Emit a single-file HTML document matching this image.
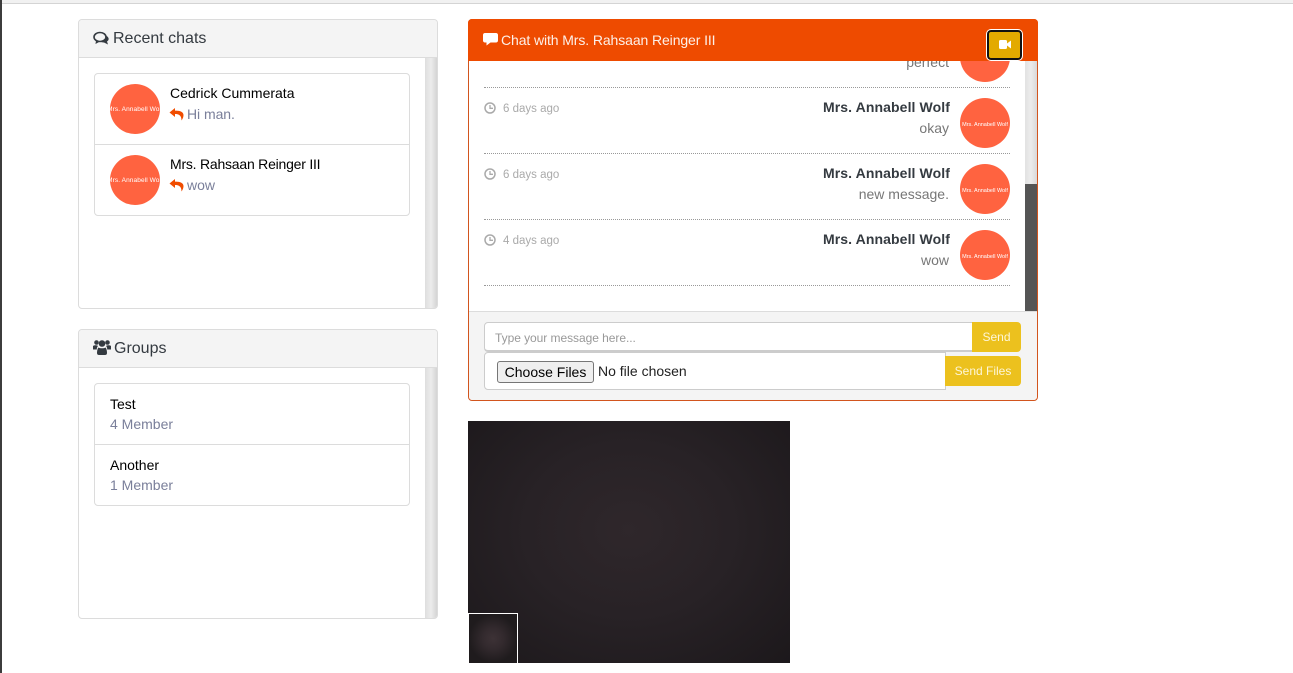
<!DOCTYPE html>
<html><head><meta charset="utf-8"><style>
*{box-sizing:border-box}
html,body{margin:0;padding:0;width:1293px;height:673px;overflow:hidden;background:#fff;font-family:"Liberation Sans",sans-serif;color:#212529}
.a{position:absolute;white-space:nowrap}
.card{position:absolute;background:#fff;border:1px solid #dcdcdc;border-radius:4px;overflow:hidden}
.hd{position:absolute;left:0;top:0;right:0;height:38px;background:#f4f4f4;border-bottom:1px solid #dcdcdc}
.sb{position:absolute;right:0;top:38px;bottom:0;width:12px;background:linear-gradient(90deg,#dedede,#ececec 50%,#d4d4d4)}
.lg{position:absolute;background:#fff;border:1px solid #dcdcdc;border-radius:4px;width:316px}
.nm{font-size:14px;color:#000}
.sub{font-size:14px;color:#7a7f9a}
.av{position:absolute;width:50px;height:50px;border-radius:50%;background:#ff6340;color:#fff;font-size:5.500px;line-height:54px;text-align:center;white-space:nowrap;overflow:hidden;display:flex;justify-content:center}
.av span{flex:none}
.dot{position:absolute;left:484px;width:526px;border-top:1px dotted #999;height:0}
.time{font-size:11.5px;color:#aaa}
.mn{font-size:14px;font-weight:bold;color:#343a40;text-align:right;right:343px;letter-spacing:.1px}
.mt{font-size:14px;color:#777;text-align:right;right:344px}
</style></head><body>
<div class="a" style="left:0;top:0;width:1293px;height:4px;background:#f1f1f1;border-bottom:1px solid #d4d4d4"></div>
<div class="a" style="left:0;top:0;width:2px;height:673px;background:#3c3c3c"></div>

<div class="card" style="left:78px;top:19px;width:360px;height:290px">
 <div class="hd"></div><div class="sb"></div>
</div>
<svg class="a" style="left:93px;top:31px" width="17" height="15" viewBox="0 0 17 15"><ellipse cx="7" cy="6" rx="6" ry="4.5" fill="none" stroke="#343a40" stroke-width="1.6"/><path d="M3 9.5 2.5 13 6.5 10.8ZM13.6 5C16 6.300 16.500 9 14 10.500L15 13.500 11 11.500C9.500 11.600 8.500 11.300 7.500 10.800 10 10.700 13.300 9 13.600 5Z" fill="#343a40"/></svg>
<div class="a" style="left:113px;top:29px;font-size:16px;line-height:19px;color:#343a40;letter-spacing:0">Recent chats</div>
<div class="lg" style="left:94px;top:73px;height:143px"><div style="position:absolute;left:0;right:0;top:70px;border-top:1px solid #dcdcdc"></div></div>
<div class="av" style="left:110px;top:84px;font-size:6.500px;letter-spacing:.1px;line-height:52px"><span>Mrs. Annabell Wolf</span></div>
<div class="a nm" style="left:170px;top:85px;line-height:17px">Cedrick Cummerata</div>
<svg class="a" style="left:169px;top:107px" width="15" height="14" viewBox="0 0 15 14"><path d="M6 1 .5 5.500 6 10V7C9.500 7 12.500 8 12.500 13.500 14 11.500 14.500 9.500 14.500 8 14.500 5 11 3.500 6 3.700Z" fill="#f04c00"/></svg>
<div class="a sub" style="left:187px;top:106px;line-height:17px;letter-spacing:-.05px">Hi man.</div>
<div class="av" style="left:110px;top:155px;font-size:6.500px;letter-spacing:.1px;line-height:52px"><span>Mrs. Annabell Wolf</span></div>
<div class="a nm" style="left:170px;top:156px;line-height:17px;letter-spacing:-.22px">Mrs. Rahsaan Reinger III</div>
<svg class="a" style="left:169px;top:178px" width="15" height="14" viewBox="0 0 15 14"><path d="M6 1 .5 5.500 6 10V7C9.500 7 12.500 8 12.500 13.500 14 11.500 14.500 9.500 14.500 8 14.500 5 11 3.500 6 3.700Z" fill="#f04c00"/></svg>
<div class="a sub" style="left:187px;top:177px;line-height:17px">wow</div>

<div class="card" style="left:78px;top:329px;width:360px;height:290px">
 <div class="hd"></div><div class="sb"></div>
</div>
<svg class="a" style="left:93px;top:339px" width="18" height="17" viewBox="0 0 18 17"><circle cx="3.500" cy="3.500" r="2.300" fill="#343a40"/><circle cx="14.500" cy="3.500" r="2.300" fill="#343a40"/><circle cx="9" cy="4.500" r="3.300" fill="#343a40"/><path d="M0 7C1 6 4 6 5 7 4 8 3.800 9 3.800 10.500H0ZM18 7C17 6 14 6 13 7 14 8 14.200 9 14.200 10.500H18Z" fill="#343a40"/><path d="M5.500 8.500C7 9.500 11 9.500 12.500 8.500 13.500 9.500 14 12 14 14 14 15.500 13 16 12 16H6C5 16 4 15.500 4 14 4 12 4.500 9.500 5.500 8.500Z" fill="#343a40"/></svg>
<div class="a" style="left:114px;top:339px;font-size:16px;line-height:19px;color:#343a40">Groups</div>
<div class="lg" style="left:94px;top:383px;height:123px"><div style="position:absolute;left:0;right:0;top:60px;border-top:1px solid #dcdcdc"></div></div>
<div class="a nm" style="left:110px;top:396px;line-height:17px">Test</div>
<div class="a sub" style="left:110px;top:416px;line-height:17px">4 Member</div>
<div class="a nm" style="left:110px;top:457px;line-height:17px">Another</div>
<div class="a sub" style="left:110px;top:477px;line-height:17px">1 Member</div>

<!-- chat -->
<div class="a" style="left:468px;top:19px;width:570px;height:382px;border:1px solid #d2551e;border-radius:4px;background:#fff"></div>
<div class="a" style="left:903px;top:55px;width:46px;text-align:right;font-size:14px;line-height:1;color:#777;height:15px;overflow:hidden">perfect</div>
<div class="av" style="left:960px;top:32px"><span>Mrs. Annabell Wolf</span></div>
<div class="dot" style="top:87px"></div>
<div class="dot" style="top:153px"></div>
<div class="dot" style="top:219px"></div>
<div class="dot" style="top:285px"></div>
<svg class="a" style="left:484px;top:102px" width="12" height="12" viewBox="0 0 12 12"><circle cx="6" cy="6" r="5" fill="none" stroke="#aaa" stroke-width="1.500"/><path d="M6 3V6.300H9" fill="none" stroke="#aaa" stroke-width="1.300"/></svg>
<div class="a time" style="left:503px;top:102px;line-height:14px">6 days ago</div>
<svg class="a" style="left:484px;top:168px" width="12" height="12" viewBox="0 0 12 12"><circle cx="6" cy="6" r="5" fill="none" stroke="#aaa" stroke-width="1.500"/><path d="M6 3V6.300H9" fill="none" stroke="#aaa" stroke-width="1.300"/></svg>
<div class="a time" style="left:503px;top:168px;line-height:14px">6 days ago</div>
<svg class="a" style="left:484px;top:234px" width="12" height="12" viewBox="0 0 12 12"><circle cx="6" cy="6" r="5" fill="none" stroke="#aaa" stroke-width="1.500"/><path d="M6 3V6.300H9" fill="none" stroke="#aaa" stroke-width="1.300"/></svg>
<div class="a time" style="left:503px;top:234px;line-height:14px">4 days ago</div>

<div class="a mn" style="top:99px;line-height:17px">Mrs. Annabell Wolf</div>
<div class="a mt" style="top:120px;line-height:17px">okay</div>
<div class="av" style="left:960px;top:98px"><span>Mrs. Annabell Wolf</span></div>
<div class="a mn" style="top:165px;line-height:17px">Mrs. Annabell Wolf</div>
<div class="a mt" style="top:186px;line-height:17px">new message.</div>
<div class="av" style="left:960px;top:164px"><span>Mrs. Annabell Wolf</span></div>
<div class="a mn" style="top:231px;line-height:17px">Mrs. Annabell Wolf</div>
<div class="a mt" style="top:252px;line-height:17px">wow</div>
<div class="av" style="left:960px;top:230px"><span>Mrs. Annabell Wolf</span></div>

<div class="a" style="left:1025px;top:61px;width:12px;height:123px;background:linear-gradient(90deg,#e2e2e2,#ececec 50%,#d9d9d9)"></div>
<div class="a" style="left:1025px;top:184px;width:12px;height:127px;background:#555"></div>

<div class="a" style="left:468px;top:19px;width:570px;height:42px;background:#ee4b00;border-radius:4px 4px 0 0"></div>
<svg class="a" style="left:483px;top:33px" width="15" height="13" viewBox="0 0 15 13"><path d="M2 0H13C14 0 15 .8 15 2V7.500C15 8.700 14 9.500 13 9.500H7.500L3.500 12.500V9.500H2C.9 9.500 0 8.700 0 7.500V2C0 .8.900 0 2 0Z" fill="#fff"/></svg>
<div class="a" style="left:501px;top:32px;font-size:14px;line-height:17px;color:#fdf0e8;letter-spacing:-.1px">Chat with Mrs. Rahsaan Reinger III</div>
<div class="a" style="left:987px;top:30px;width:35px;height:30px;background:#e3aa00;border:2px solid #111;outline:1px solid #fff;border-radius:4px"></div>
<svg class="a" style="left:999px;top:40px" width="12" height="9" viewBox="0 0 12 9"><rect x="0" y="0" width="8" height="9" rx="1.500" fill="#fff"/><path d="M8 3.500 12 .5V8.500L8 5.500Z" fill="#fff"/></svg>

<div class="a" style="left:469px;top:311px;width:568px;height:89px;background:#f4f4f4;border-top:1px solid #dcdcdc;border-radius:0 0 4px 4px"></div>
<div class="a" style="left:484px;top:322px;width:489px;height:30px;background:#fff;border:1px solid #ccc;border-bottom-width:2px;border-radius:4px 0 0 4px;font-size:12px;line-height:30px;padding-left:10px;color:#999;letter-spacing:-.05px">Type your message here...</div>
<div class="a" style="left:972px;top:322px;width:49px;height:30px;background:#ecc11e;border-radius:0 4px 4px 0;color:#fdf6d8;font-size:12px;line-height:30px;text-align:center">Send</div>
<div class="a" style="left:484px;top:352px;width:462px;height:38px;background:#fff;border:1px solid #ccc;border-radius:4px 0 0 4px"></div>
<div class="a" style="left:497px;top:361px;width:97px;height:22px;background:#efefef;border:1px solid #767676;border-radius:3px;font-size:14px;line-height:20px;text-align:center;color:#000">Choose Files</div>
<div class="a" style="left:598px;top:363px;font-size:14px;line-height:17px;color:#222">No file chosen</div>
<div class="a" style="left:945px;top:356px;width:76px;height:30px;background:#ecc11e;border-radius:0 4px 4px 0;color:#fdf6d8;font-size:12px;line-height:30px;text-align:center">Send Files</div>

<!-- video -->
<div class="a" style="left:468px;top:421px;width:322px;height:242px;background:radial-gradient(ellipse at 50% 45%,#2f272b 0%,#282226 45%,#1c181b 100%)"></div>
<div class="a" style="left:468px;top:613px;width:50px;height:50px;border:1px solid #fff;border-bottom:0;background:radial-gradient(circle at 50% 50%,#3d3236 0%,#332a2e 30%,#1f1b1d 70%)"></div>
</body></html>
